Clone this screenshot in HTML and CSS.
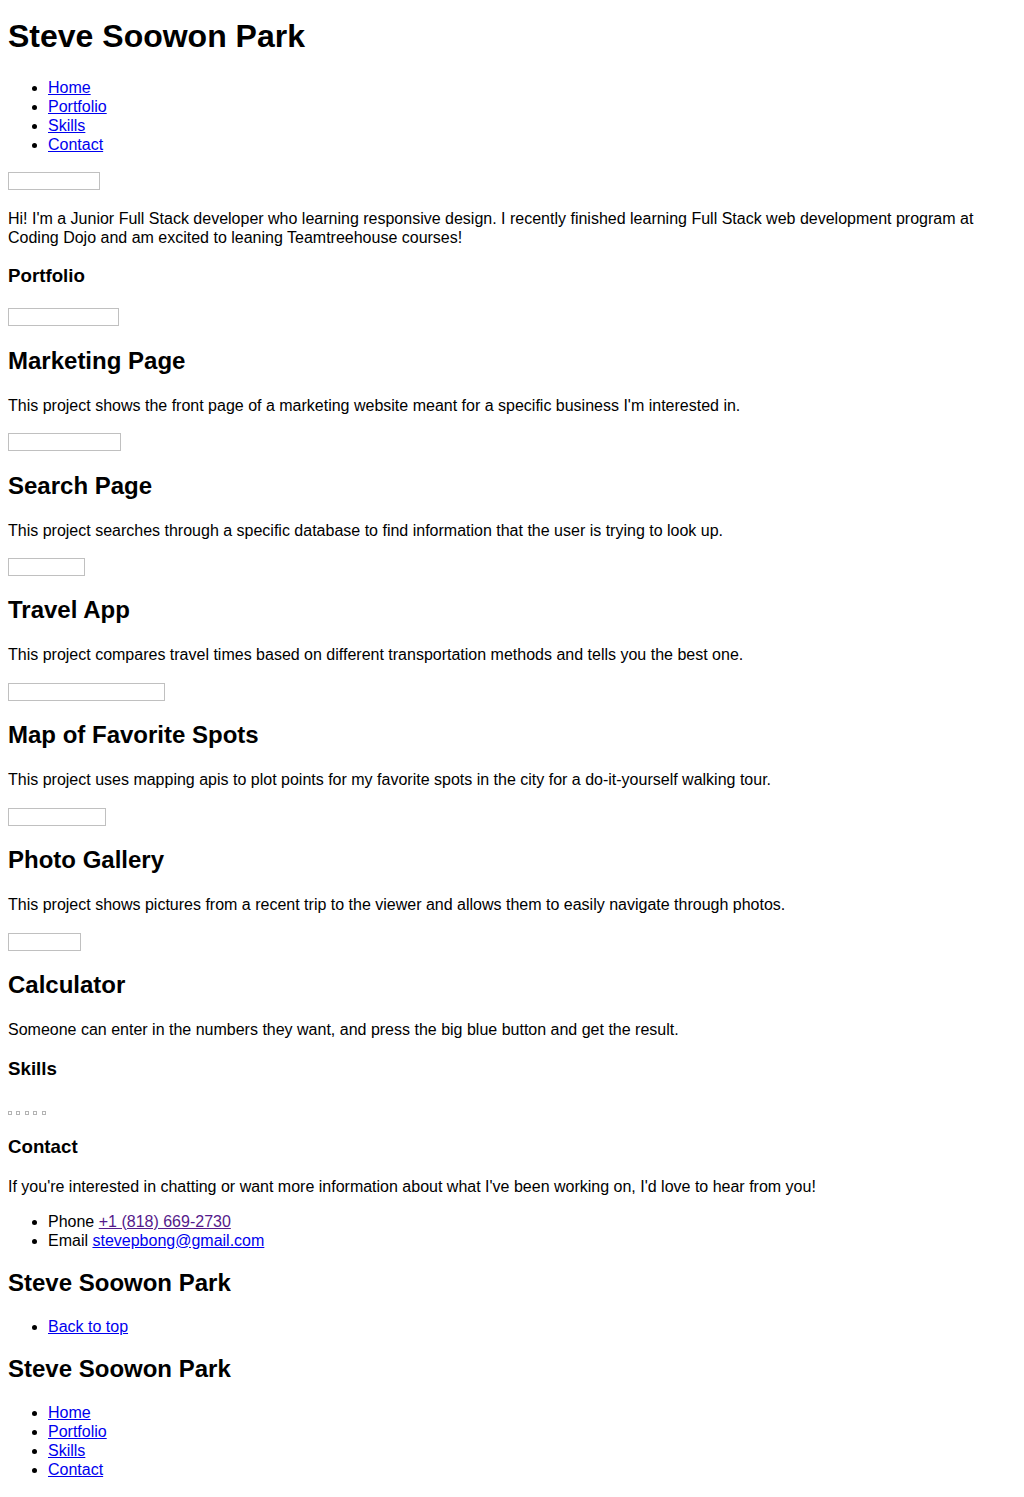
FILE: index.html
```html
<!DOCTYPE html>
<html lang="en">
<head>
<meta charset="utf-8">
<title>Steve Soowon Park</title>
<link rel="stylesheet" href="styles.css">
</head>
<body>
<div class="page">
  <header>
    <h1 class="site-title">Steve Soowon Park</h1>
    <nav>
      <ul class="list">
        <li><a href="#top">Home</a></li>
        <li><a href="#portfolio">Portfolio</a></li>
        <li><a href="#skills">Skills</a></li>
        <li><a href="#contact">Contact</a></li>
      </ul>
    </nav>
  </header>

  <main>
    <div class="pic"><span class="broken w92"></span></div>
    <p class="text">Hi! I'm a Junior Full Stack developer who learning responsive design. I recently finished learning Full Stack web development program at Coding Dojo and am excited to leaning Teamtreehouse courses!</p>

    <h3 class="sub" id="portfolio">Portfolio</h3>
    <div class="pic"><span class="broken w111"></span></div>
    <h2 class="project">Marketing Page</h2>
    <p class="text">This project shows the front page of a marketing website meant for a specific business I'm interested in.</p>
    <div class="pic"><span class="broken w113"></span></div>
    <h2 class="project">Search Page</h2>
    <p class="text">This project searches through a specific database to find information that the user is trying to look up.</p>
    <div class="pic"><span class="broken w77"></span></div>
    <h2 class="project">Travel App</h2>
    <p class="text">This project compares travel times based on different transportation methods and tells you the best one.</p>
    <div class="pic"><span class="broken w157"></span></div>
    <h2 class="project">Map of Favorite Spots</h2>
    <p class="text">This project uses mapping apis to plot points for my favorite spots in the city for a do-it-yourself walking tour.</p>
    <div class="pic"><span class="broken w98"></span></div>
    <h2 class="project">Photo Gallery</h2>
    <p class="text">This project shows pictures from a recent trip to the viewer and allows them to easily navigate through photos.</p>
    <div class="pic"><span class="broken w73"></span></div>
    <h2 class="project">Calculator</h2>
    <p class="text">Someone can enter in the numbers they want, and press the big blue button and get the result.</p>

    <h3 class="sub" id="skills">Skills</h3>
    <p class="text icons"><span class="dot"></span> <span class="dot"></span> <span class="dot"></span> <span class="dot"></span> <span class="dot"></span></p>

    <h3 class="sub" id="contact">Contact</h3>
    <p class="text">If you're interested in chatting or want more information about what I've been working on, I'd love to hear from you!</p>
    <ul class="list">
      <li>Phone <a class="visited" href="tel:+18186692730">+1 (818) 669-2730</a></li>
      <li>Email <a href="mailto:stevepbong@gmail.com">stevepbong@gmail.com</a></li>
    </ul>
  </main>

  <footer>
    <h2 class="title">Steve Soowon Park</h2>
    <ul class="list">
      <li><a href="#top">Back to top</a></li>
    </ul>
    <h2 class="title">Steve Soowon Park</h2>
    <ul class="list">
      <li><a href="#top">Home</a></li>
      <li><a href="#portfolio">Portfolio</a></li>
      <li><a href="#skills">Skills</a></li>
      <li><a href="#contact">Contact</a></li>
    </ul>
  </footer>
</div>
</body>
</html>
```
FILE: styles.css
```css
html, body {
  margin: 0;
  padding: 0;
  background: #fff;
}

.page {
  padding: 8px;
  font-family: "Liberation Sans", Arial, sans-serif;
  font-size: 16px;
  line-height: 19px;
  color: #000;
}

a { color: #0000ee; text-decoration: underline; }
a.visited { color: #551a8b; }

.site-title {
  font-size: 32px;
  font-weight: bold;
  line-height: 38px;
  margin: 9px 0 22.5px;
}

.title,
.project {
  font-size: 24px;
  font-weight: bold;
  line-height: 28px;
  margin: 19.92px 0;
}

.project {
  margin: 17.92px 0 20.92px;
}

.sub {
  font-size: 18.72px;
  font-weight: bold;
  line-height: 22px;
  margin: 18.72px 0;
}

.text {
  margin: 16px 0;
  line-height: 19px;
}

.list {
  margin: 16px 0;
  padding-left: 40px;
  list-style: disc;
  line-height: 19px;
}

footer .title:first-child {
  margin-top: 18.92px;
}

.pic {
  margin: 16px 0;
  padding: 2.5px 0;
  line-height: 0;
}

.broken {
  display: block;
  height: 16px;
  border: 1px solid #c0c0c0;
}
.w92 { width: 90px; }
.w111 { width: 109px; }
.w113 { width: 111px; }
.w77 { width: 75px; }
.w157 { width: 155px; }
.w98 { width: 96px; }
.w73 { width: 71px; }

.dot {
  display: inline-block;
  width: 2px;
  height: 2px;
  border: 1px solid #b4b4b4;
  vertical-align: -2px;
}
```
